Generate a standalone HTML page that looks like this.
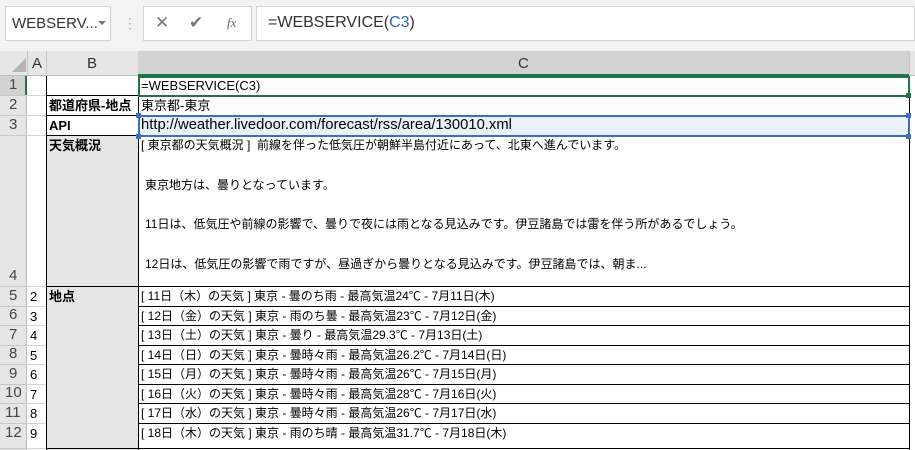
<!DOCTYPE html><html><head><meta charset="utf-8"><style>
*{margin:0;padding:0;box-sizing:border-box}
body{width:915px;height:450px;overflow:hidden;background:#fff;font-family:"Liberation Sans","Noto Sans CJK JP",sans-serif;position:relative;font-size:12px;color:#000}
.a{position:absolute}
.t{position:absolute;white-space:nowrap;line-height:19px}
</style></head><body>
<div class="a" style="left:0;top:0;width:915px;height:51px;background:#f3f3f3"></div>
<div class="a" style="left:5px;top:6px;width:106px;height:35px;background:#fff;border:1px solid #d4d4d4"></div>
<div class="t" style="left:12px;top:14px;font-size:15px;color:#333;line-height:20px">WEBSERV...</div>
<div class="a" style="left:98px;top:21px;border-left:4px solid transparent;border-right:4px solid transparent;border-top:4px solid #777"></div>
<div class="t" style="left:123px;top:14px;color:#aaa;font-size:14px">⋮</div>
<div class="a" style="left:143px;top:6px;width:109px;height:35px;background:#fff;border:1px solid #d4d4d4"></div>
<div class="t" style="left:155px;top:13px;color:#777;font-size:17px">✕</div>
<div class="t" style="left:189px;top:13px;color:#777;font-size:17px">✔</div>
<div class="t" style="left:227px;top:13px;color:#666;font-size:13px;font-style:italic;font-family:'Liberation Serif',serif">fx</div>
<div class="a" style="left:256px;top:6px;width:659px;height:35px;background:#fff;border:1px solid #d4d4d4"></div>
<div class="t" style="left:268px;top:13px;font-size:16px;color:#333;line-height:20px">=WEBSERVICE(<span style="color:#2e6bb3">C3</span>)</div>
<div class="a" style="left:0;top:51px;width:915px;height:25px;background:#e6e6e6;border-bottom:1px solid #bdbdbd"></div>
<div class="a" style="left:12px;top:58px;border-left:14px solid transparent;border-bottom:14px solid #b5b5b5"></div>
<div class="a" style="left:27px;top:51px;width:1px;height:25px;background:#c8c8c8"></div>
<div class="a" style="left:46px;top:51px;width:1px;height:25px;background:#c8c8c8"></div>
<div class="a" style="left:138px;top:51px;width:771px;height:25px;background:#d2d2d2;border-bottom:2px solid #217346"></div>
<div class="a" style="left:909px;top:51px;width:1px;height:25px;background:#c8c8c8"></div>
<div class="t" style="left:32px;top:54px;font-size:15px;color:#333">A</div>
<div class="t" style="left:87px;top:54px;font-size:15px;color:#333">B</div>
<div class="t" style="left:518px;top:54px;font-size:15px;color:#333">C</div>
<div class="a" style="left:0;top:76px;width:27px;height:374px;background:#e6e6e6;border-right:1px solid #bdbdbd"></div>
<div class="a" style="left:25px;top:76px;width:2px;height:20px;background:#217346"></div>
<div class="a" style="left:0;top:76px;width:25px;height:20px;background:#d2d2d2"></div>
<div id="rn"></div>
<div class="a" style="left:46px;top:136px;width:92px;height:314px;background:#e6e6e6"></div>
<div class="a" style="left:138px;top:116px;width:771px;height:20px;background:#eaf1fb"></div>
<div id="g"></div>
<div class="a" style="left:138px;top:76px;width:772px;height:21px;border:2px solid #217346"></div>
<div class="a" style="left:906px;top:93px;width:5px;height:5px;background:#217346"></div>
<div class="a" style="left:138px;top:115px;width:772px;height:22px;border:2px solid #3a6fc4"></div>
<div class="a" style="left:136px;top:113px;width:5px;height:5px;background:#3a6fc4"></div>
<div class="a" style="left:136px;top:134px;width:5px;height:5px;background:#3a6fc4"></div>
<div class="a" style="left:906px;top:113px;width:5px;height:5px;background:#3a6fc4"></div>
<div class="a" style="left:906px;top:134px;width:5px;height:5px;background:#3a6fc4"></div>
<div class="t" style="left:141px;top:76px;font-size:13px">=WEBSERVICE(C3)</div>
<div class="t" style="left:49px;top:96px;font-weight:bold;font-size:13px">都道府県-地点</div>
<div class="t" style="left:141px;top:96px;font-size:13px">東京都-東京</div>
<div class="t" style="left:49px;top:116px;font-weight:bold;font-size:13px">API</div>
<div class="t" style="left:141px;top:116px;font-size:14.8px">http://weather.livedoor.com/forecast/rss/area/130010.xml</div>
<div class="t" style="left:49px;top:136px;font-weight:bold;font-size:13px">天気概況</div>
<div class="t" style="left:141px;top:136px">[ 東京都の天気概況 ]&nbsp; 前線を伴った低気圧が朝鮮半島付近にあって、北東へ進んでいます。</div>
<div class="t" style="left:145px;top:176px">東京地方は、曇りとなっています。</div>
<div class="t" style="left:145px;top:215px">11日は、低気圧や前線の影響で、曇りで夜には雨となる見込みです。伊豆諸島では雷を伴う所があるでしょう。</div>
<div class="t" style="left:145px;top:255px">12日は、低気圧の影響で雨ですが、昼過ぎから曇りとなる見込みです。伊豆諸島では、朝ま...</div>
<div class="t" style="left:49px;top:287px;font-weight:bold;font-size:13px">地点</div>
<script>
var tops=[76,96,116,136,287,307,326,346,365,385,404,424,449];
var rn=document.getElementById('rn'),g=document.getElementById('g'),h='',q='';
for(var i=0;i<12;i++){var t=tops[i],b=tops[i+1];var nb=(i==11)?444:b;
h+='<div class="t" style="left:'+(i>=9?5:9)+'px;top:'+(nb-21)+'px;font-size:15px;color:#444">'+(i+1)+'</div>';
h+='<div class="a" style="left:0;top:'+(b-1)+'px;width:27px;height:1px;background:#c8c8c8"></div>';
q+='<div class="a" style="left:27px;top:'+(b-1)+'px;width:19px;height:1px;background:#d4d4d4"></div>';
if(i<3||i==11)q+='<div class="a" style="left:46px;top:'+(b-1)+'px;width:92px;height:1px;background:#000"></div>';
q+='<div class="a" style="left:138px;top:'+(b-1)+'px;width:771px;height:1px;background:#000"></div>';
}
q+='<div class="a" style="left:46px;top:76px;width:1px;height:374px;background:#000"></div>';
q+='<div class="a" style="left:138px;top:76px;width:1px;height:374px;background:#000"></div>';
q+='<div class="a" style="left:909px;top:76px;width:1px;height:374px;background:#000"></div>';
q+='<div class="a" style="left:46px;top:286px;width:92px;height:1px;background:#000"></div>';
var d=[["11","木","曇のち雨","24℃","7月11日(木)"],["12","金","雨のち曇","23℃","7月12日(金)"],["13","土","曇り","29.3℃","7月13日(土)"],["14","日","曇時々雨","26.2℃","7月14日(日)"],["15","月","曇時々雨","26℃","7月15日(月)"],["16","火","曇時々雨","28℃","7月16日(火)"],["17","水","曇時々雨","26℃","7月17日(水)"],["18","木","雨のち晴","31.7℃","7月18日(木)"]];
for(var j=0;j<8;j++){var t=tops[j+4];
q+='<div class="t" style="left:30px;top:'+t+'px;font-size:13px">'+(j+2)+'</div>';
q+='<div class="t" style="left:141px;top:'+t+'px">[ '+d[j][0]+'日（'+d[j][1]+'）の天気 ] 東京 - '+d[j][2]+' - 最高気温'+d[j][3]+' - '+d[j][4]+'</div>';}
rn.innerHTML=h;g.innerHTML=q;
</script>
</body></html>
